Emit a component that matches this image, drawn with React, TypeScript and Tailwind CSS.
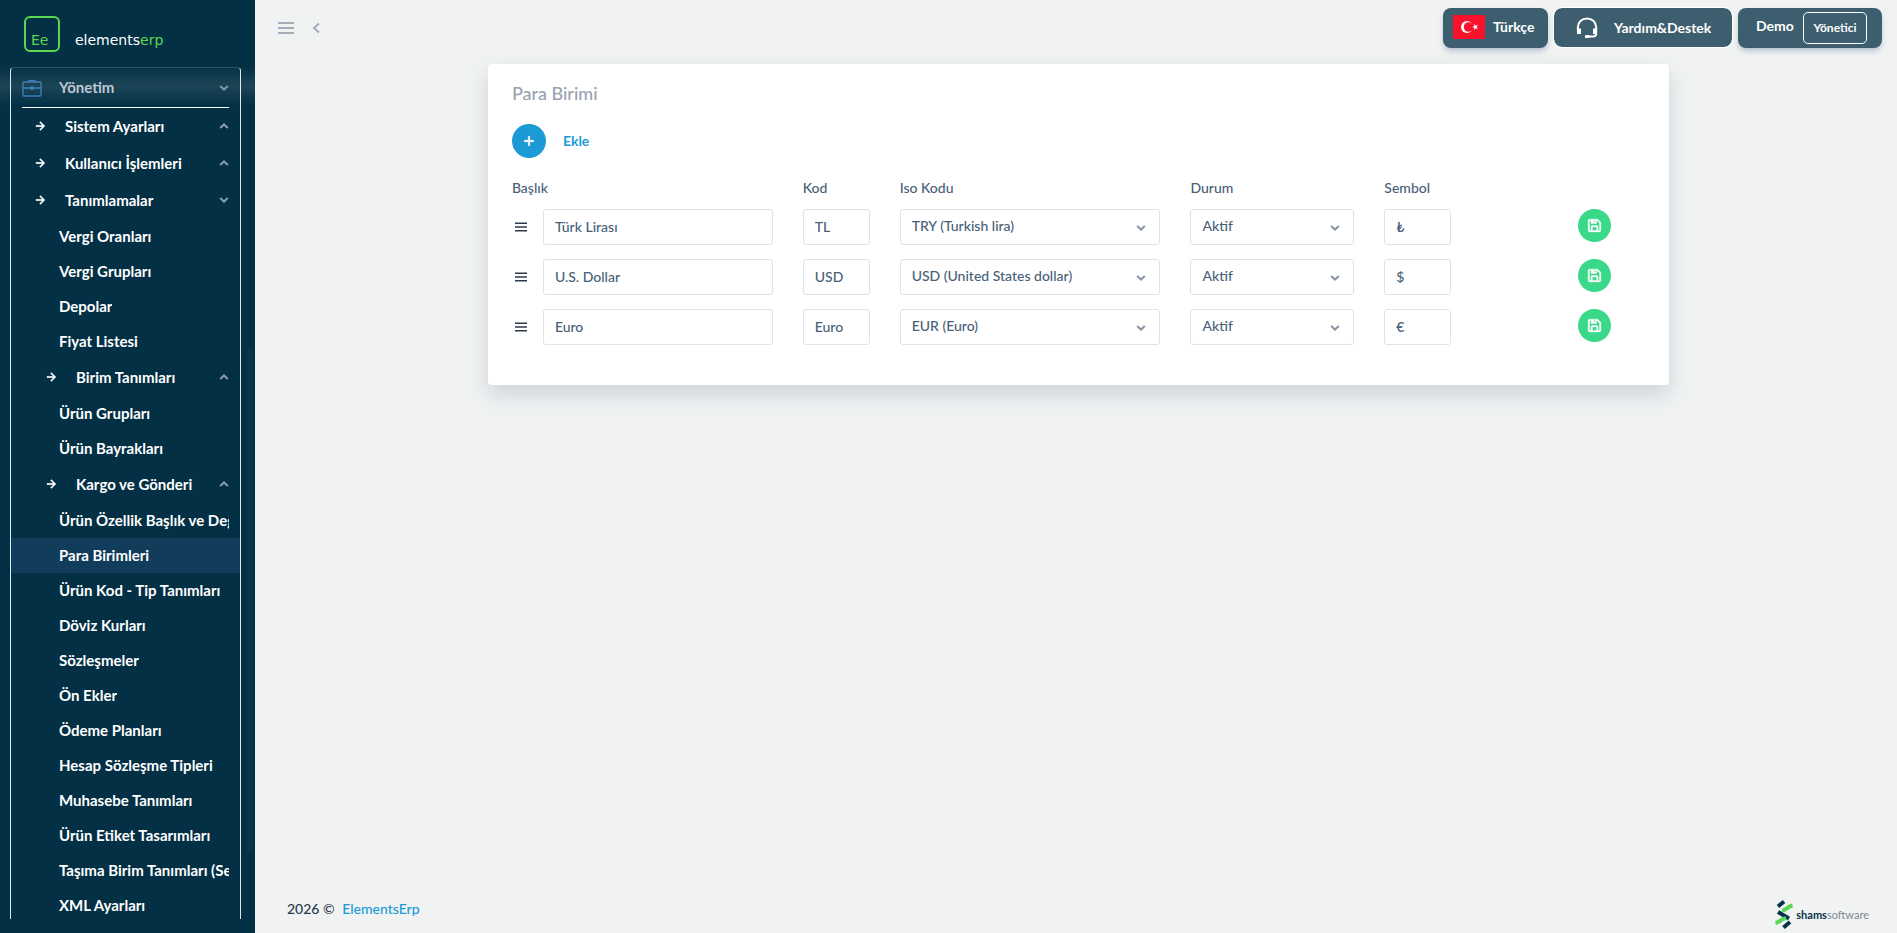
import { useState } from "react"
import { BiMenu, BiPlus, BiRightArrowAlt, BiSave } from "react-icons/bi"

interface MenuItem {
  label: string
  level?: 1 | 2
  open?: boolean
}

interface Currency {
  title: string
  code: string
  iso: string
  status: string
  symbol: string
}

const menuItems: MenuItem[] = [
  { label: "Sistem Ayarları", level: 1 },
  { label: "Kullanıcı İşlemleri", level: 1 },
  { label: "Tanımlamalar", level: 1, open: true },
  { label: "Vergi Oranları" },
  { label: "Vergi Grupları" },
  { label: "Depolar" },
  { label: "Fiyat Listesi" },
  { label: "Birim Tanımları", level: 2 },
  { label: "Ürün Grupları" },
  { label: "Ürün Bayrakları" },
  { label: "Kargo ve Gönderi", level: 2 },
  { label: "Ürün Özellik Başlık ve Değerleri" },
  { label: "Para Birimleri" },
  { label: "Ürün Kod - Tip Tanımları" },
  { label: "Döviz Kurları" },
  { label: "Sözleşmeler" },
  { label: "Ön Ekler" },
  { label: "Ödeme Planları" },
  { label: "Hesap Sözleşme Tipleri" },
  { label: "Muhasebe Tanımları" },
  { label: "Ürün Etiket Tasarımları" },
  { label: "Taşıma Birim Tanımları (Sevkiyat)" },
  { label: "XML Ayarları" },
]

const initialCurrencies: Currency[] = [
  { title: "Türk Lirası", code: "TL", iso: "TRY (Turkish lira)", status: "Aktif", symbol: "₺" },
  { title: "U.S. Dollar", code: "USD", iso: "USD (United States dollar)", status: "Aktif", symbol: "$" },
  { title: "Euro", code: "Euro", iso: "EUR (Euro)", status: "Aktif", symbol: "€" },
]

const isoOptions = ["TRY (Turkish lira)", "USD (United States dollar)", "EUR (Euro)"]
const statusOptions = ["Aktif", "Pasif"]

const fieldClass =
  "h-9 w-full min-w-0 rounded-[3px] border border-[#dfe2e6] bg-white px-[11px] pb-0.5 text-sm font-medium text-[#495f78] outline-none focus:border-[#1b9ad6]"

function Chevron({ up = false, className = "" }: { up?: boolean; className?: string }) {
  return (
    <svg
      viewBox="0 0 10 6"
      className={`h-1.5 w-2.5 shrink-0 fill-none stroke-current stroke-2 ${up ? "rotate-180" : ""} ${className}`}
      aria-hidden="true"
    >
      <path d="M1.2 1 L5 4.6 L8.8 1" />
    </svg>
  )
}

function BriefcaseIcon() {
  return (
    <svg viewBox="0 0 20 18" className="h-[18px] w-5 shrink-0 fill-none stroke-[#2f76b5]" aria-hidden="true">
      <rect x="1" y="3" width="18" height="14" rx="1" strokeWidth="1.4" />
      <path d="M7 3V1.6H13V3" strokeWidth="1.4" />
      <path d="M1 9H19" strokeWidth="1.4" />
      <rect x="9" y="8" width="2" height="2.4" strokeWidth="1" />
    </svg>
  )
}

function HeadsetIcon() {
  return (
    <svg viewBox="0 0 22 22" className="size-[22px] fill-none stroke-white" aria-hidden="true">
      <path d="M1.8 13V10.5C1.8 5.4 5.8 1.5 11 1.5S20.2 5.4 20.2 10.5V16.5C20.2 18.6 19 19.6 17 19.6H9.5" strokeWidth="2" />
      <path d="M3 11.5V17M19 11.5V17" strokeWidth="4" />
      <path d="M9 19.6H13.5" strokeWidth="2.8" />
    </svg>
  )
}

function SidebarItem({ item, active, onSelect }: { item: MenuItem; active: boolean; onSelect: () => void }) {
  if (item.level) {
    return (
      <button
        type="button"
        className={`flex h-[37px] w-full items-center pr-[11px] pb-px text-left ${item.level === 1 ? "pl-[21px]" : "pl-8"}`}
      >
        <BiRightArrowAlt className="size-4 shrink-0 stroke-[0.5]" />
        <span className="flex-1 truncate pl-[17px]">{item.label}</span>
        <Chevron up={!item.open} className="text-[#8d9bb0]" />
      </button>
    )
  }

  return (
    <a
      href="#"
      onClick={(e) => {
        e.preventDefault()
        onSelect()
      }}
      className={`flex h-[35px] items-center pr-[11px] pb-px pl-12 ${active ? "bg-[#113c5c]" : ""}`}
    >
      <span className="overflow-hidden whitespace-nowrap">{item.label}</span>
    </a>
  )
}

function Sidebar() {
  const [active, setActive] = useState("Para Birimleri")

  return (
    <aside className="relative flex w-[255px] shrink-0 flex-col overflow-hidden bg-[#033044] pb-3.5">
      <a href="#" className="flex h-[67px] shrink-0 items-start gap-[15px] pt-4 pl-6">
        <span className="flex size-9 items-end rounded-md border-2 border-[#5bd852] pb-0.5 pl-[5px] font-['DejaVu_Sans'] text-sm leading-4 text-[#5bd852]">
          Ee
        </span>
        <span className="pt-3.5 font-['DejaVu_Sans'] text-sm leading-5 text-white">
          elements<span className="text-[#5bd852]">erp</span>
        </span>
      </a>

      <nav className="mr-3.5 ml-2.5 min-h-0 flex-1 overflow-hidden rounded-t border-x border-t border-x-[#e3e8ec] border-t-white/15 text-[15px] font-bold text-white">
        <button
          type="button"
          className="mx-[11px] flex h-10 w-[207px] items-center border-b border-white text-left text-[#b9c3cf]"
        >
          <BriefcaseIcon />
          <span className="flex-1 pl-[17px]">Yönetim</span>
          <Chevron className="text-[#7d8ba0]" />
        </button>
        {menuItems.map((item) => (
          <SidebarItem
            key={item.label}
            item={item}
            active={item.label === active}
            onSelect={() => setActive(item.label)}
          />
        ))}
      </nav>

      {/* fade under the logo */}
      <div className="pointer-events-none absolute inset-x-0 top-[66px] h-10 bg-linear-to-b from-transparent via-white/10 to-transparent" />
      {/* scrollbar thumb */}
      <div className="absolute top-[350px] right-0.5 bottom-[81px] w-1.5 rounded bg-[#0c374a]" />
    </aside>
  )
}

function Topbar() {
  return (
    <header className="flex h-14 items-start justify-between pr-[15px] pl-[23px]">
      <div className="flex items-center gap-[18px] pt-[22px] text-[#a3adbc]">
        <button type="button" aria-label="Menü">
          <svg viewBox="0 0 16 12" className="h-3 w-4 fill-none stroke-current stroke-2" aria-hidden="true">
            <path d="M0 1H16M0 6H16M0 11H16" />
          </svg>
        </button>
        <button type="button" aria-label="Geri">
          <svg viewBox="0 0 8 12" className="h-3 w-2 fill-none stroke-current stroke-2" aria-hidden="true">
            <path d="M7 1.5 L2 6 L7 10.5" />
          </svg>
        </button>
      </div>

      <div className="flex items-start gap-1.5 pt-2 text-sm font-bold text-white">
        <button
          type="button"
          className="flex h-10 w-[105px] items-center gap-2 rounded-lg bg-[#3d5e6f] pb-0.5 pl-2.5 shadow-md shadow-slate-400/50"
        >
          <svg viewBox="0 0 32 24" className="h-6 w-8" aria-hidden="true">
            <rect width="32" height="24" fill="#f8122c" />
            <circle cx="14" cy="12" r="6" fill="#fff" />
            <circle cx="15.6" cy="12" r="4.8" fill="#f8122c" />
            <path d="M19 12l2.3-.8v-2.4l1.4 2 2.3-.8-1.4 2 1.4 2-2.3-.8-1.4 2v-2.4z" fill="#fff" />
          </svg>
          Türkçe
        </button>
        <button
          type="button"
          className="flex h-[39px] w-[178px] items-center gap-4 rounded-lg bg-[#3d5e6f] pl-[22px] outline outline-white"
        >
          <HeadsetIcon />
          Yardım&amp;Destek
        </button>
        <div className="flex h-10 w-36 items-center justify-between rounded-lg bg-[#3d5e6f] pr-[15px] pl-[18px] shadow-md shadow-slate-400/50">
          <span className="pb-1">Demo</span>
          <button type="button" className="h-8 w-16 rounded-[5px] border border-white text-xs">
            Yönetici
          </button>
        </div>
      </div>
    </header>
  )
}

function SelectField({ label, value, options, onChange }: {
  label: string
  value: string
  options: string[]
  onChange: (value: string) => void
}) {
  return (
    <div className="relative">
      <select
        aria-label={label}
        value={value}
        onChange={(e) => onChange(e.target.value)}
        className={`${fieldClass} appearance-none`}
      >
        {options.map((option) => (
          <option key={option}>{option}</option>
        ))}
      </select>
      <Chevron className="pointer-events-none absolute top-4 right-3.5 text-[#8593a3]" />
    </div>
  )
}

function CurrencyCard() {
  const [rows, setRows] = useState(initialCurrencies)

  const updateRow = (index: number, field: keyof Currency, value: string) => {
    setRows(rows.map((row, i) => (i === index ? { ...row, [field]: value } : row)))
  }

  const addRow = () => {
    setRows([...rows, { title: "", code: "", iso: isoOptions[0], status: "Aktif", symbol: "" }])
  }

  return (
    <section className="mx-auto w-3/4 rounded bg-white px-6 pt-[17px] pb-10 shadow-[0_10px_22px_rgba(65,80,110,0.2)]">
      <h4 className="text-lg leading-6 font-medium text-[#98a2b0]">Para Birimi</h4>

      <button type="button" onClick={addRow} className="mt-[19px] flex items-center gap-[17px]">
        <span className="flex size-[34px] items-center justify-center rounded-full bg-[#1b9ad6] text-white">
          <BiPlus className="size-4 stroke-1" />
        </span>
        <span className="text-sm font-bold text-[#1b9ad6]">Ekle</span>
      </button>

      <div className="mt-5 grid grid-cols-12 gap-x-[30px] text-sm leading-5 font-medium text-[#495f78]">
        <span className="col-span-3">Başlık</span>
        <span>Kod</span>
        <span className="col-span-3">Iso Kodu</span>
        <span className="col-span-2">Durum</span>
        <span>Sembol</span>
      </div>

      <div className="mt-[11px] flex flex-col gap-3.5">
        {rows.map((row, index) => (
          <div key={index} className="grid grid-cols-12 gap-x-[30px]">
            <div className="col-span-3 flex items-center gap-[13px]">
              <BiMenu className="size-[18px] shrink-0 text-[#2c3a4c]" />
              <input
                aria-label="Başlık"
                value={row.title}
                onChange={(e) => updateRow(index, "title", e.target.value)}
                className={fieldClass}
              />
            </div>
            <input
              aria-label="Kod"
              value={row.code}
              onChange={(e) => updateRow(index, "code", e.target.value)}
              className={fieldClass}
            />
            <div className="col-span-3">
              <SelectField
                label="Iso Kodu"
                value={row.iso}
                options={isoOptions}
                onChange={(value) => updateRow(index, "iso", value)}
              />
            </div>
            <div className="col-span-2">
              <SelectField
                label="Durum"
                value={row.status}
                options={statusOptions}
                onChange={(value) => updateRow(index, "status", value)}
              />
            </div>
            <input
              aria-label="Sembol"
              value={row.symbol}
              onChange={(e) => updateRow(index, "symbol", e.target.value)}
              className={fieldClass}
            />
            <div className="col-span-2 flex justify-end pr-[34px]">
              <button
                type="button"
                aria-label="Kaydet"
                className="flex size-[33px] items-center justify-center rounded-full bg-[#3ad98a] text-white"
              >
                <BiSave className="size-[17px] stroke-[0.5]" />
              </button>
            </div>
          </div>
        ))}
      </div>
    </section>
  )
}

function Footer() {
  return (
    <footer className="mt-auto flex h-12 items-center justify-between pr-7 pl-8">
      <p className="text-sm font-medium text-[#2c3a4c]">
        2026 ©{" "}
        <a href="#" className="pl-1 text-[#1b9ad6]">
          ElementsErp
        </a>
      </p>
      <a href="#" className="flex items-center gap-0.5 pt-2.5 text-[11px] text-[#7d8894]">
        <svg viewBox="0 0 20 32" className="h-8 w-5" aria-hidden="true">
          <g fill="none" strokeWidth="4">
            <path d="M4 8.5 L10 3.5" stroke="#063247" />
            <path d="M4 14 L15 20.5" stroke="#063247" />
            <path d="M9.5 29.5 L16 24" stroke="#063247" />
            <path d="M8 12 C12 13 12 9 18.5 7.5" stroke="#5bd852" />
            <path d="M1.5 25 C7 24 7 20 12 20.5" stroke="#5bd852" />
          </g>
        </svg>
        <span className="pt-0.5">
          <b className="text-[#063247]">shams</b>software
        </span>
      </a>
    </footer>
  )
}

function App() {
  return (
    <div className="flex h-screen bg-[#f1f3f3] font-['Lato',sans-serif]">
      <Sidebar />
      <div className="flex min-w-0 flex-1 flex-col">
        <Topbar />
        <main className="pt-2 pr-[31px] pl-9">
          <CurrencyCard />
        </main>
        <Footer />
      </div>
    </div>
  )
}

export default App
